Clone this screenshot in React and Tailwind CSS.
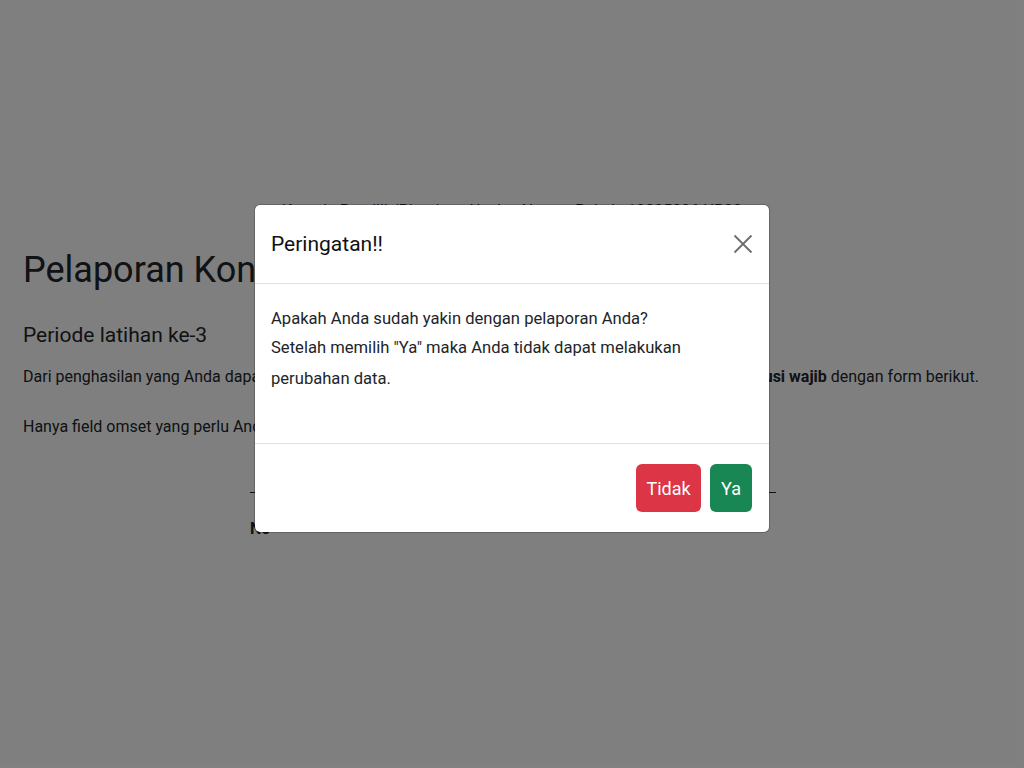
import React from "react";

export default function App() {
  return (
    <div className="relative w-[1024px] h-[768px] overflow-hidden bg-white font-['Roboto',sans-serif] text-[#212529]">
      {/* page content behind the backdrop */}
      <div className="px-[23px] pt-[199px]">
        <div className="text-center text-[16px] leading-[24px]">
          Kepada Pemilik/Pimpinan Usaha, Nomor Pokok: 12325326-UP00
        </div>
        <h1 className="mt-[23px] text-[36px] leading-[48px] font-normal">Pelaporan Kontribusi</h1>
        <h4 className="mt-[26px] text-[21px] leading-[30px]">Periode latihan ke-3</h4>
        <p className="mt-[12px] text-[16px] leading-[30px] whitespace-nowrap">
          Dari penghasilan yang Anda dapat pada periode latihan ini, silakan laporkan besaran omset serta{" "}
          <b className="font-bold">kontribusi wajib</b> dengan form berikut.
        </p>
        <p className="mt-[20px] text-[16px] leading-[30px]">
          Hanya field omset yang perlu Anda isi, field lainnya akan terhitung otomatis.
        </p>
        <div className="ml-[227px] mt-[50px] w-[526px] border-t border-[#212529]">
          <div className="pt-[24px] text-[16px] font-bold leading-[24px]">No</div>
        </div>
      </div>

      {/* backdrop */}
      <div className="absolute inset-0 bg-black/50" />

      {/* modal */}
      <div className="absolute left-[254px] top-[204px] w-[516px] rounded-[6px] border border-black/20 bg-white bg-clip-padding">
        <div className="flex h-[79px] items-center justify-between border-b border-[#dee2e6] pl-[16px] pr-[14px]">
          <div className="text-[21px] leading-[30px] text-[#111]">Peringatan!!</div>
          <button className="flex h-[24px] w-[24px] items-center justify-center text-[#6c6c6c]">
            <svg width="20" height="20" viewBox="0 0 20 20" fill="none" stroke="currentColor" strokeWidth="1.8">
              <path d="M1.5 1.5 L18.5 18.5 M18.5 1.5 L1.5 18.5" />
            </svg>
          </button>
        </div>
        <div className="h-[160px] border-b border-[#dee2e6] px-[16px] pt-[20px] text-[16.6px] leading-[29px] text-[#212529]">
          Apakah Anda sudah yakin dengan pelaporan Anda?
          <br />
          Setelah memilih "Ya" maka Anda tidak dapat melakukan
          <br />
          <span className="inline-block pt-[2px]">perubahan data.</span>
        </div>
        <div className="flex h-[88px] items-center justify-end gap-[9px] px-[17px]">
          <button className="h-[48px] w-[65px] rounded-[6px] bg-[#dc3545] text-[18px] text-white">Tidak</button>
          <button className="h-[48px] w-[42px] rounded-[6px] bg-[#198754] text-[18px] text-white">Ya</button>
        </div>
      </div>
    </div>
  );
}
